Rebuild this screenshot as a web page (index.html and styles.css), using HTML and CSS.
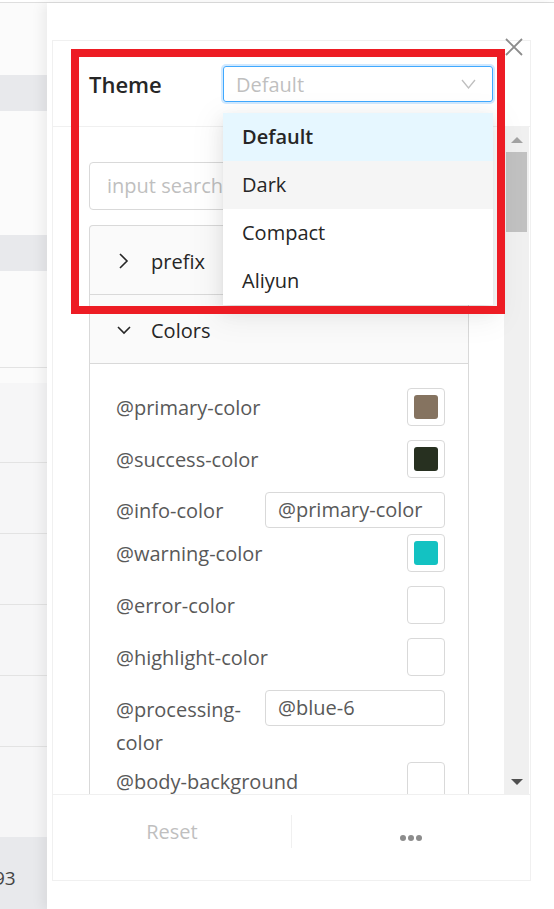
FILE: index.html
```html
<!DOCTYPE html>
<html>
<head>
<meta charset="utf-8">
<link rel="stylesheet" href="styles.css">
</head>
<body>
<div class="topline"></div>
<div class="layout">
  <div class="bgpage">
    <div class="bg-gap" style="height:72px"></div>
    <div class="bg-band" style="height:36px"></div>
    <div class="bg-gap" style="height:124px"></div>
    <div class="bg-band" style="height:36px"></div>
    <div class="bg-row" style="height:97px"></div>
    <div class="bg-gap" style="height:15px"></div>
    <div class="bg-row light" style="height:80px"></div>
    <div class="bg-row light" style="height:71px"></div>
    <div class="bg-row light" style="height:71px"></div>
    <div class="bg-row light" style="height:71px"></div>
    <div class="bg-row light" style="height:71px"></div>
    <div class="bg-gap light" style="height:90px"></div>
    <div class="bg-foot">93</div>
  </div>
  <div class="drawer">
    <div class="card">
      <div class="card-head">
        <div class="title">Theme</div>
        <div class="select">
          <span class="select-value">Default</span>
          <svg class="select-arrow" width="15" height="10" viewBox="0 0 15 10"><path d="M1 1 L7.5 9 L14 1" fill="none" stroke="#bfbfbf" stroke-width="1.3"/></svg>
        </div>
      </div>
      <div class="card-body">
        <div class="content">
          <div class="search">input search</div>
          <div class="collapse">
            <div class="panel-head">
              <svg class="chev" width="14" height="16" viewBox="0 0 14 16"><path d="M3 1 L10 8 L3 15" fill="none" stroke="#262626" stroke-width="1.6"/></svg>
              <span>prefix</span>
            </div>
            <div class="panel-head">
              <svg class="chev" width="14" height="16" viewBox="0 0 14 16"><path d="M1 5 L7 11 L13 5" fill="none" stroke="#262626" stroke-width="1.6"/></svg>
              <span>Colors</span>
            </div>
            <div class="panel-body">
              <div class="row"><span class="label">@primary-color</span><span class="swatch"><i style="background:#857360"></i></span></div>
              <div class="row"><span class="label">@success-color</span><span class="swatch"><i style="background:#273020"></i></span></div>
              <div class="row row-input"><span class="label">@info-color</span><span class="field">@primary-color</span></div>
              <div class="row"><span class="label">@warning-color</span><span class="swatch"><i style="background:#13c2c2"></i></span></div>
              <div class="row"><span class="label">@error-color</span><span class="swatch"><i></i></span></div>
              <div class="row"><span class="label">@highlight-color</span><span class="swatch"><i></i></span></div>
              <div class="row row-input row-top"><span class="label narrow">@processing-color</span><span class="field">@blue-6</span></div>
              <div class="row"><span class="label">@body-background</span><span class="swatch"><i></i></span></div>
            </div>
          </div>
        </div>
        <div class="scrollbar">
          <div class="sb-btn"><span class="tri-up"></span></div>
          <div class="sb-track"><div class="sb-thumb"></div></div>
          <div class="sb-btn"><span class="tri-down"></span></div>
        </div>
      </div>
      <div class="card-foot">
        <div class="foot-cell reset">Reset</div>
        <div class="foot-sep"></div>
        <div class="foot-cell"><span class="dots"><i></i><i></i><i></i></span></div>
      </div>

      <svg class="close" width="18" height="18" viewBox="0 0 18 18"><path d="M1 1 L17 17 M17 1 L1 17" stroke="#8c8c8c" stroke-width="1.8"/></svg>
      <div class="dropdown">
        <div class="opt active">Default</div>
        <div class="opt hover">Dark</div>
        <div class="opt">Compact</div>
        <div class="opt">Aliyun</div>
      </div>
      <div class="redbox"></div>
    </div>
  </div>
</div>
</body>
</html>
```

FILE: styles.css
```css
* { box-sizing: border-box; }
html, body { margin: 0; padding: 0; }
body {
  width: 554px;
  height: 909px;
  overflow: hidden;
  background: #fff;
  font-family: "Open Sans", "Noto Sans", sans-serif;
  color: #595959;
}
.topline { height: 3px; border-bottom: 1px solid #dedede; }
.layout { display: flex; height: 906px; }
.bgpage {
  width: 47px;
  flex: none;
  background: #fbfbfb;
  display: flex;
  flex-direction: column;
}
.bg-band { background: #e8e9ec; }
.bg-row { border-bottom: 1px solid #e3e3e3; }
.light { background: #f6f6f7; }
.bg-foot {
  flex: 1;
  background: #e8e9ec;
  font-size: 19px;
  color: #444;
  padding-top: 28px;
  text-indent: -6px;
}
.drawer {
  flex: 1;
  background: #fff;
  padding: 37px 23px 28px 5px;
  box-shadow: -4px 0 12px rgba(0,0,0,0.07);
  position: relative;
  z-index: 1;
}
.card {
  position: relative;
  height: 100%;
  border: 1px solid #f0f0f0;
  display: flex;
  flex-direction: column;
}
.card-head {
  height: 86px;
  flex: none;
  border-bottom: 1px solid #f0f0f0;
  display: flex;
  align-items: center;
  padding-left: 36px;
  padding-top: 1px;
}
.title {
  width: 134px;
  font-size: 22px;
  font-weight: 600;
  color: #262626;
}
.select {
  width: 270px;
  height: 36px;
  border: 1px solid #40a9ff;
  border-radius: 3px;
  box-shadow: 0 0 0 2px rgba(24,144,255,0.2);
  display: flex;
  align-items: center;
  justify-content: space-between;
  padding: 0 16px 0 12px;
}
.select-value { font-size: 20px; color: #bfbfbf; }
.card-body {
  flex: 1;
  display: flex;
  min-height: 0;
}
.content {
  flex: 1;
  overflow: hidden;
  padding: 35px 35px 0 36px;
}
.search {
  height: 48px;
  border: 1px solid #d9d9d9;
  border-radius: 4px;
  font-size: 20px;
  color: #bfbfbf;
  padding-left: 17px;
  line-height: 46px;
  margin-bottom: 15px;
}
.collapse {
  border: 1px solid #d9d9d9;
  border-bottom: 0;
  border-radius: 4px 4px 0 0;
  background: #fafafa;
}
.panel-head {
  height: 69px;
  border-bottom: 1px solid #d9d9d9;
  display: flex;
  align-items: center;
  padding-left: 27px;
  padding-top: 2px;
  font-size: 20px;
  color: #262626;
}
.chev { margin-right: 20px; }
.panel-body {
  background: #fff;
  padding: 24px 23px 0 26px;
  height: 600px;
}
.row {
  display: flex;
  align-items: center;
  justify-content: space-between;
  margin-bottom: 14px;
}
.row-input { margin-bottom: 6px; }
.row-top { align-items: flex-start; margin-bottom: 3px; }
.row-top .label { margin-top: 3px; }
.label {
  font-size: 20px;
  line-height: 33px;
  color: #595959;
}
.narrow { width: 140px; }
.swatch {
  width: 38px;
  height: 38px;
  border: 1px solid #d9d9d9;
  border-radius: 4px;
  padding: 6px;
  flex: none;
}
.swatch i { display: block; width: 24px; height: 24px; border-radius: 3px; }
.field {
  width: 180px;
  height: 36px;
  border: 1px solid #d9d9d9;
  border-radius: 4px;
  font-size: 20px;
  line-height: 34px;
  padding-left: 12px;
  color: #595959;
  flex: none;
}
.scrollbar {
  width: 25px;
  flex: none;
  background: #f0f0f0;
  display: flex;
  flex-direction: column;
  margin-right: 1px;
}
.sb-btn { height: 25px; display: flex; align-items: center; justify-content: center; }
.tri-up { border: 6px solid transparent; border-bottom: 6px solid #a3a3a3; border-top: 0; }
.tri-down { border: 6px solid transparent; border-top: 6px solid #505050; border-bottom: 0; }
.sb-track { flex: 1; padding: 0 2px; }
.sb-thumb { height: 80px; background: #c1c1c1; }
.card-foot {
  height: 86px;
  flex: none;
  border-top: 1px solid #f0f0f0;
  display: flex;
  align-items: center;
  padding-bottom: 12px;
}
.foot-cell { flex: 1; text-align: center; }
.reset { font-size: 20px; color: #bfbfbf; }
.foot-sep { width: 1px; height: 33px; background: #f0f0f0; }
.dots { display: flex; justify-content: center; gap: 2px; margin-top: 12px; }
.dots i { width: 6px; height: 6px; border-radius: 50%; background: #8c8c8c; display: block; }
.close { position: absolute; left: 452px; top: -3px; }
.dropdown {
  position: absolute;
  left: 170px;
  top: 72px;
  width: 270px;
  background: #fff;
  box-shadow: 0 3px 6px -4px rgba(0,0,0,.12), 0 6px 16px 0 rgba(0,0,0,.08), 0 9px 28px 8px rgba(0,0,0,.05);
}
.opt {
  height: 48px;
  line-height: 48px;
  padding-left: 19px;
  font-size: 20px;
  color: #262626;
}
.opt.active { background: #e6f7ff; font-weight: 600; }
.opt.hover { background: #f5f5f5; }
.redbox {
  position: absolute;
  left: 18px;
  top: 8px;
  width: 434px;
  height: 265px;
  border: 8px solid #ed1c24;
}
```
